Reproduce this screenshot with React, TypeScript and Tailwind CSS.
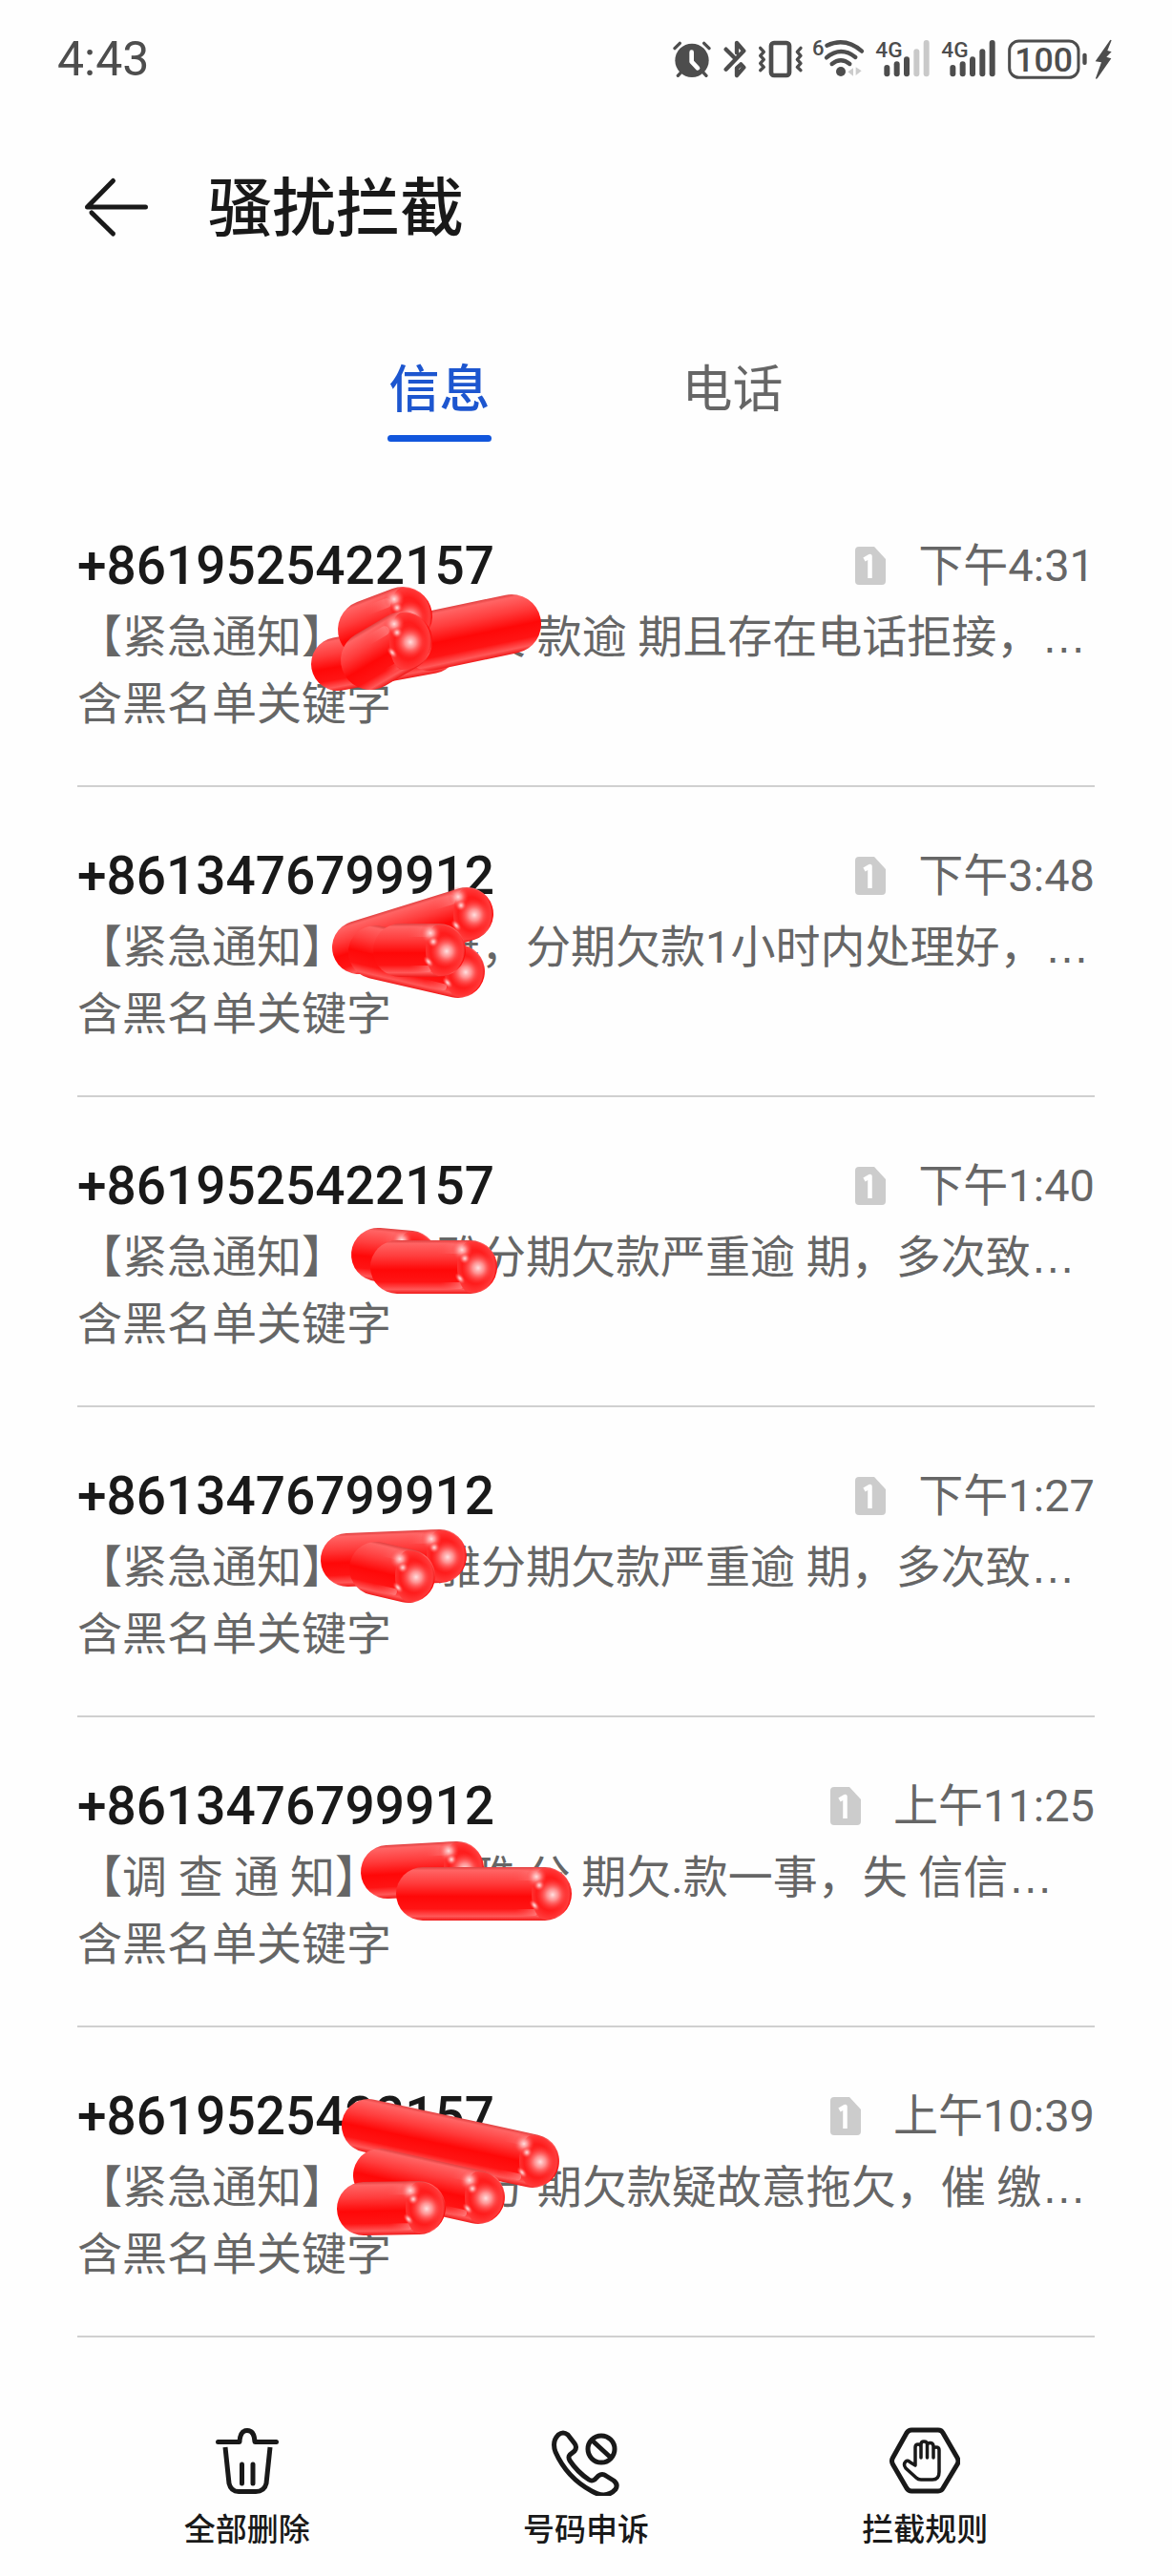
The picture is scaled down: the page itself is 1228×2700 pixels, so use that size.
import { useState } from 'react';

type Tube = { from: [number, number]; to: [number, number]; r?: number; plain?: boolean };

type Message = {
  phone: string;
  time: string;
  text: string;
  marks: Tube[];
};

// covered characters are kept as full-width blanks
const messages: Message[] = [
  {
    phone: '+8619525422157',
    time: '下午4:31',
    text: '【紧急通知】　　　欠 款逾 期且存在电话拒接，',
    marks: [
      { from: [354, 196], to: [452, 178], plain: true },
      { from: [450, 172], to: [536, 154], r: 31, plain: true },
      { from: [385, 160], to: [422, 146], r: 31 },
      { from: [388, 192], to: [422, 172], r: 31 },
    ],
  },
  {
    phone: '+8613476799912',
    time: '下午3:48',
    text: '【紧急通知】　　雅，分期欠款1小时内处理好，',
    marks: [
      { from: [376, 168], to: [489, 133] },
      { from: [393, 173], to: [480, 193] },
      { from: [419, 171], to: [460, 171] },
    ],
  },
  {
    phone: '+8619525422157',
    time: '下午1:40',
    text: '【紧急通知】　　雅分期欠款严重逾 期，多次致',
    marks: [
      { from: [396, 165], to: [430, 168] },
      { from: [416, 178], to: [493, 178] },
    ],
  },
  {
    phone: '+8613476799912',
    time: '下午1:27',
    text: '【紧急通知】　　雅分期欠款严重逾 期，多次致',
    marks: [
      { from: [364, 160], to: [461, 156] },
      { from: [394, 169], to: [428, 177] },
    ],
  },
  {
    phone: '+8613476799912',
    time: '上午11:25',
    text: '【调 查 通 知】　　雅 分 期欠.款一事，失 信信',
    marks: [
      { from: [406, 162], to: [479, 158] },
      { from: [443, 185], to: [571, 185] },
    ],
  },
  {
    phone: '+8619525422157',
    time: '上午10:39',
    text: '【紧急通知】　　　分 期欠款疑故意拖欠，催 缴',
    marks: [
      { from: [400, 160], to: [484, 166] },
      { from: [386, 103], to: [558, 140] },
      { from: [398, 155], to: [501, 178] },
      { from: [381, 190], to: [439, 189] },
    ],
  },
];

function StatusBar() {
  return (
    <div className="flex h-[124px] items-center justify-between pl-[60px] pr-[62px] text-[#4d4d4d]">
      <span className="text-[50px] leading-none">4:43</span>
      <div className="flex items-center">
        {/* alarm */}
        <svg className="mr-[13px] h-10 w-10" viewBox="75 64 120 120" fill="none" stroke="currentColor" strokeLinecap="round">
          <circle cx="135" cy="128" r="53" fill="currentColor" stroke="none" />
          <path d="M81 90L97 74M189 90L173 74M91 176L104 162M180 176L167 162" strokeWidth="10" />
          <path d="M134 102V132L153 152" stroke="#fff" strokeWidth="14" strokeLinejoin="round" />
        </svg>
        {/* bluetooth */}
        <svg className="mr-3 h-10 w-6" viewBox="235 64 72 120" fill="none" stroke="currentColor" strokeWidth="13" strokeLinecap="round" strokeLinejoin="round">
          <path d="M243 93L268 118M243 156L299 98L277 73V104M290 140L299 150L277 175V152L287 143" />
        </svg>
        {/* vibrate */}
        <svg className="mr-[10px] h-10 w-12" viewBox="346 64 144 120" fill="none" stroke="currentColor" strokeLinecap="round" strokeLinejoin="round">
          <rect x="388" y="73" width="57" height="102" rx="9" strokeWidth="14" />
          <path d="M354 89L365 101L354 113L365 125L354 137L365 149L354 159M481 89L470 101L481 113L470 125L481 137L470 149L481 159" strokeWidth="10" />
        </svg>
        {/* wifi 6 */}
        <svg className="mr-3 h-10 w-[54px] overflow-visible" viewBox="520 64 162 120" fill="none" stroke="currentColor" strokeLinecap="round">
          <text x="517" y="113" fontSize="66" fontWeight="500" fill="currentColor" stroke="none" fontFamily="Roboto, sans-serif">6</text>
          <path d="M563 81Q622 54 673 99M562 119Q607 82 653 118M579 139Q607 116 635 139" strokeWidth="13" />
          <circle cx="607" cy="163" r="15" fill="currentColor" stroke="none" />
          <path d="M646 152V177L629 164ZM654 149V175L672 161Z" fill="#ccc" stroke="none" />
        </svg>
        <Signal bars={3} />
        <Signal bars={5} />
        {/* battery */}
        <svg className="h-[42px] w-[110px] overflow-visible" viewBox="1126 58 330 126" fill="none" stroke="currentColor">
          <rect x="1131" y="64" width="217" height="115" rx="30" strokeWidth="9" />
          <rect x="1361" y="102" width="13" height="37" rx="6" fill="currentColor" stroke="none" />
          <path d="M1448 60L1401 128L1420 131L1402 181Q1402 185 1407 182L1451 119L1436 114L1452 98L1439 94L1452 62Z" fill="currentColor" stroke="none" />
          <text x="1239" y="161" textAnchor="middle" fontSize="107" fontWeight="500" fill="currentColor" stroke="none" fontFamily="Roboto, sans-serif">100</text>
        </svg>
      </div>
    </div>
  );
}

function Signal({ bars }: { bars: number }) {
  const tops = [142, 131, 116, 92, 64];
  return (
    <svg className="mr-[13px] h-10 w-14 overflow-visible" viewBox="713 64 168 120" fill="currentColor">
      <text x="711" y="117" fontSize="68" fontWeight="500" fontFamily="Roboto, sans-serif">4G</text>
      {tops.map((top, i) => (
        <rect key={top} x={738 + i * 31} y={top} width="18" height={179 - top} rx="9" fill={i < bars ? '#4d4d4d' : '#c9c9c9'} />
      ))}
    </svg>
  );
}

function SimBadge() {
  return (
    <svg className="h-10 w-8" viewBox="0 0 32 40" aria-label="SIM 1">
      <path d="M4 0H20L32 13V36Q32 40 28 40H4Q0 40 0 36V4Q0 0 4 0Z" fill="#ccc" />
      <path d="M9.500 13.500L15.500 10V33" fill="none" stroke="#fff" strokeWidth="4.500" strokeLinejoin="round" />
    </svg>
  );
}

// Glossy red marker strokes
function MarkerDefs() {
  return (
    <svg className="absolute h-0 w-0" aria-hidden="true">
      <defs>
        <linearGradient id="tube" x1="0" y1="0" x2="0" y2="1">
          <stop offset="0" stopColor="#e04040" />
          <stop offset="0.060" stopColor="#ff6464" />
          <stop offset="0.300" stopColor="#ff3c3c" />
          <stop offset="0.550" stopColor="#ff0808" />
          <stop offset="0.780" stopColor="#ff1414" />
          <stop offset="0.920" stopColor="#ff5858" />
          <stop offset="1" stopColor="#f01818" />
        </linearGradient>
        <radialGradient id="ball" cx="0.450" cy="0.500" r="0.550">
          <stop offset="0" stopColor="#ff2a2a" />
          <stop offset="0.600" stopColor="#ff1c1c" />
          <stop offset="0.920" stopColor="#ff3c3c" />
          <stop offset="1" stopColor="#f02828" />
        </radialGradient>
        <linearGradient id="fade" x1="0" y1="0" x2="1" y2="0">
          <stop offset="0" stopColor="#ff4a4a" stopOpacity="0" />
          <stop offset="1" stopColor="#ff9a9a" stopOpacity="0.600" />
        </linearGradient>
        <radialGradient id="shine">
          <stop offset="0" stopColor="#ffe0e0" />
          <stop offset="0.350" stopColor="#ffa4a4" stopOpacity="0.850" />
          <stop offset="1" stopColor="#ff3c3c" stopOpacity="0" />
        </radialGradient>
      </defs>
    </svg>
  );
}

function MarkerTube({ from, to, r = 28, plain }: Tube) {
  const dx = to[0] - from[0];
  const dy = to[1] - from[1];
  const length = Math.hypot(dx, dy);
  const angle = (Math.atan2(dy, dx) * 180) / Math.PI;

  return (
    <g transform={`translate(${to[0]} ${to[1]})`}>
      <g transform={`rotate(${angle})`}>
        <rect x={-length - r} y={-r} width={length + r * 2} height={r * 2} rx={r} fill="url(#tube)" />
        {!plain && <rect x="-36" y="-24" width="30" height="10" rx="5" fill="url(#fade)" />}
        {!plain && <rect x="-32" y="16" width="24" height="7" rx="3" fill="url(#fade)" />}
      </g>
      {!plain && (
        <>
          <path d={`M0 ${-r + 1}A${r - 1} ${r - 1} 0 0 1 0 ${r - 1}A14 ${r - 1} 0 0 1 0 ${-r + 1}`} fill="url(#ball)" />
          <circle cx="8" cy="1" r="17" fill="url(#shine)" />
          <circle cx="-9" cy="-18" r="11" fill="url(#shine)" />
          <circle cx="-6" cy="-9" r="6" fill="url(#shine)" />
          <ellipse cx="-11" cy="12" rx="7" ry="4" transform="rotate(50 -11 12)" fill="url(#shine)" />
        </>
      )}
    </g>
  );
}

function MessageRow({ message }: { message: Message }) {
  return (
    <li className="relative h-[325px] border-b-2 border-[#d0d0d0] pt-[57px]">
      <div className="mb-1 flex h-[72px] items-center justify-between leading-[72px]">
        <span className="text-[55px] font-medium text-[#191919]">{message.phone}</span>
        <span className="flex items-center gap-[34px] text-[47px] text-[#666]">
          <SimBadge />
          {message.time}
        </span>
      </div>
      <p className="overflow-hidden whitespace-pre text-[47px] leading-[70px] text-[#666] [text-spacing-trim:space-all]">
        {message.text}
        <span className="font-['Liberation_Sans']">…</span>
      </p>
      <p className="text-[47px] leading-[70px] text-[#666]">含黑名单关键字</p>
      <svg className="pointer-events-none absolute left-0 top-0 h-[325px] w-[532px]" viewBox="81 0 532 325" aria-hidden="true">
        {message.marks.map((mark, i) => (
          <MarkerTube key={i} {...mark} />
        ))}
      </svg>
    </li>
  );
}

function BottomBar() {
  const button = 'flex flex-1 flex-col items-center gap-4 text-[33px] font-medium leading-[40px]';
  return (
    <nav className="flex px-[81px] pb-[28px] pt-[92px] text-[#191919]">
      <button className={button}>
        <svg className="h-[74px] w-[74px]" viewBox="0 0 74 74" fill="none" stroke="currentColor" strokeWidth="5" strokeLinecap="round">
          <path d="M6.500 17.500H29Q29.500 5.500 37 5.500T45 17.500H67.500" strokeLinejoin="round" />
          <path d="M14 23L18 61Q20 69.500 28 69.500H46Q55 69.500 57 61L61 23" strokeLinecap="butt" />
          <path d="M31.500 41V61M43 41V61" />
        </svg>
        全部删除
      </button>
      <button className={button}>
        <svg className="h-[74px] w-[74px]" viewBox="0 0 74 74" fill="none" stroke="currentColor" strokeWidth="5" strokeLinecap="round" strokeLinejoin="round">
          <path d="M8 10Q13 6 18 10L25 19Q28 23 25 27L20 31Q18 33 20 37Q28 49 40 57Q43 59 46 57L50 53Q54 50 58 53L66 58Q71 62 68 67Q58 78 43 69Q17 55 5 28Q1 17 8 10Z" />
          <circle cx="53" cy="25" r="14" />
          <path d="M43.500 16L62.500 33.500" />
        </svg>
        号码申诉
      </button>
      <button className={button}>
        <svg className="h-[74px] w-[74px]" viewBox="0 0 74 74" fill="none" stroke="currentColor" strokeLinejoin="round" strokeLinecap="round">
          <path d="M23 5H51Q54.500 5 56 8L71 34Q73 37.500 71 41L56 66Q54.500 69 51 69H23Q20 69 18 66L3.500 41Q1.500 37.500 3.500 34L18 8Q20 5 23 5Z" strokeWidth="5" />
          <path d="M27 42V23Q27 20 30 20Q33 20 33 23V34V20Q33 17 36 17Q39.500 17 39.500 20V34V21Q40 18 43 18.500Q46 19 46 22V34V25Q46 23 49 23Q52 23 52 26V49Q52 57 45 57H33Q30 57 28 55L17 45Q14 41 17 38Q19 36 22 39L27 42" strokeWidth="3.500" />
        </svg>
        拦截规则
      </button>
    </nav>
  );
}

export default function App() {
  const [activeTab, setActiveTab] = useState('信息');

  return (
    <main className="min-h-screen overflow-hidden bg-[#fefefe] font-[Roboto,'Noto_Sans_CJK_SC',sans-serif]">
      <MarkerDefs />
      <StatusBar />
      <header className="flex h-[186px] items-center gap-[62px] px-[86px]">
        <button aria-label="返回">
          <svg className="h-[66px] w-[70px]" viewBox="0 0 70 66" fill="none" stroke="#191919" strokeWidth="5" strokeLinecap="round" strokeLinejoin="round">
            <path d="M66.500 33H5.500L32.500 5.500" />
            <path d="M10 39L32.500 61" />
          </svg>
        </button>
        <h1 className="pt-1 text-[67px] font-medium leading-none text-[#191919]">骚扰拦截</h1>
      </header>
      <div className="flex justify-center pb-[37px] pt-[59px]">
        {['信息', '电话'].map((tab) => (
          <div key={tab} className="flex w-1/4 justify-center">
            <button
              onClick={() => setActiveTab(tab)}
              className={
                activeTab === tab
                  ? 'flex flex-col items-center gap-[7px] text-[53px] font-medium leading-[80px] text-[#1d56cf]'
                  : 'flex flex-col items-center gap-[7px] text-[53px] leading-[80px] text-[#666]'
              }
            >
              {tab}
              <span className={activeTab === tab ? 'h-[7px] w-[109px] rounded-full bg-[#1256dc]' : 'h-[7px] w-[109px]'} />
            </button>
          </div>
        ))}
      </div>
      <ul className="px-[81px]">
        {messages.map((message, i) => (
          <MessageRow key={i} message={message} />
        ))}
      </ul>
      <BottomBar />
    </main>
  );
}
